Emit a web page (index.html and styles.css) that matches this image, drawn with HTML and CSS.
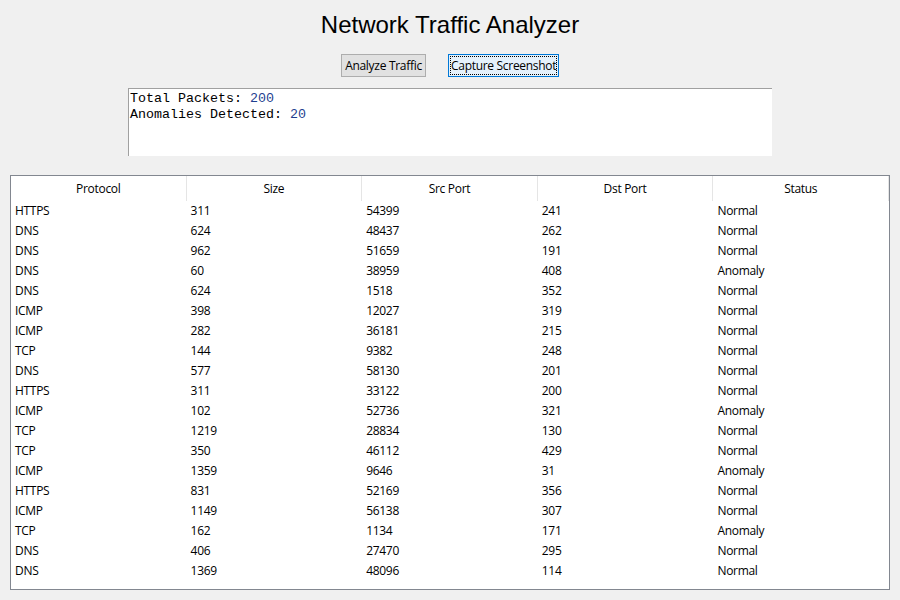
FILE: index.html
```html
<!DOCTYPE html>
<html lang="en">
<head>
<meta charset="utf-8">
<title>Network Traffic Analyzer</title>
<link rel="stylesheet" href="styles.css">
</head>
<body>
<h1 class="title">Network Traffic Analyzer</h1>
<div class="actions">
  <button class="btn">Analyze Traffic</button>
  <button class="btn btn-focus"><span class="focus-ring">Capture Screenshot</span></button>
</div>
<div class="summary">
  <div class="line">Total Packets: <span class="num">200</span></div>
  <div class="line">Anomalies Detected: <span class="num">20</span></div>
</div>
<div class="table">
  <div class="head">
    <div class="hcell">Protocol</div>
    <div class="hcell">Size</div>
    <div class="hcell">Src Port</div>
    <div class="hcell">Dst Port</div>
    <div class="hcell">Status</div>
  </div>
  <div class="body">
    <div class="row"><div class="cell">HTTPS</div><div class="cell">311</div><div class="cell">54399</div><div class="cell">241</div><div class="cell">Normal</div></div>
    <div class="row"><div class="cell">DNS</div><div class="cell">624</div><div class="cell">48437</div><div class="cell">262</div><div class="cell">Normal</div></div>
    <div class="row"><div class="cell">DNS</div><div class="cell">962</div><div class="cell">51659</div><div class="cell">191</div><div class="cell">Normal</div></div>
    <div class="row"><div class="cell">DNS</div><div class="cell">60</div><div class="cell">38959</div><div class="cell">408</div><div class="cell">Anomaly</div></div>
    <div class="row"><div class="cell">DNS</div><div class="cell">624</div><div class="cell">1518</div><div class="cell">352</div><div class="cell">Normal</div></div>
    <div class="row"><div class="cell">ICMP</div><div class="cell">398</div><div class="cell">12027</div><div class="cell">319</div><div class="cell">Normal</div></div>
    <div class="row"><div class="cell">ICMP</div><div class="cell">282</div><div class="cell">36181</div><div class="cell">215</div><div class="cell">Normal</div></div>
    <div class="row"><div class="cell">TCP</div><div class="cell">144</div><div class="cell">9382</div><div class="cell">248</div><div class="cell">Normal</div></div>
    <div class="row"><div class="cell">DNS</div><div class="cell">577</div><div class="cell">58130</div><div class="cell">201</div><div class="cell">Normal</div></div>
    <div class="row"><div class="cell">HTTPS</div><div class="cell">311</div><div class="cell">33122</div><div class="cell">200</div><div class="cell">Normal</div></div>
    <div class="row"><div class="cell">ICMP</div><div class="cell">102</div><div class="cell">52736</div><div class="cell">321</div><div class="cell">Anomaly</div></div>
    <div class="row"><div class="cell">TCP</div><div class="cell">1219</div><div class="cell">28834</div><div class="cell">130</div><div class="cell">Normal</div></div>
    <div class="row"><div class="cell">TCP</div><div class="cell">350</div><div class="cell">46112</div><div class="cell">429</div><div class="cell">Normal</div></div>
    <div class="row"><div class="cell">ICMP</div><div class="cell">1359</div><div class="cell">9646</div><div class="cell">31</div><div class="cell">Anomaly</div></div>
    <div class="row"><div class="cell">HTTPS</div><div class="cell">831</div><div class="cell">52169</div><div class="cell">356</div><div class="cell">Normal</div></div>
    <div class="row"><div class="cell">ICMP</div><div class="cell">1149</div><div class="cell">56138</div><div class="cell">307</div><div class="cell">Normal</div></div>
    <div class="row"><div class="cell">TCP</div><div class="cell">162</div><div class="cell">1134</div><div class="cell">171</div><div class="cell">Anomaly</div></div>
    <div class="row"><div class="cell">DNS</div><div class="cell">406</div><div class="cell">27470</div><div class="cell">295</div><div class="cell">Normal</div></div>
    <div class="row"><div class="cell">DNS</div><div class="cell">1369</div><div class="cell">48096</div><div class="cell">114</div><div class="cell">Normal</div></div>
  </div>
</div>
</body>
</html>
```
FILE: styles.css
```css
* { box-sizing: border-box; }
html, body { margin: 0; padding: 0; }
body {
  width: 900px;
  height: 600px;
  background: #f0f0f0;
  color: #000;
  font-family: "Open Sans", "Noto Sans", sans-serif;
  font-size: 12px;
  letter-spacing: -0.3px;
  overflow: hidden;
}
.title {
  margin: 11px 0 0;
  height: 28px;
  line-height: 28px;
  text-align: center;
  font-family: "Liberation Sans", Arial, sans-serif;
  font-weight: normal;
  font-size: 24px;
  letter-spacing: 0;
}
.actions {
  margin-top: 15px;
  display: flex;
  justify-content: center;
  gap: 22px;
}
.btn {
  height: 23px;
  padding: 0;
  border: 1px solid #adadad;
  background: #e1e1e1;
  font-family: "Open Sans", "Noto Sans", sans-serif;
  font-size: 12px;
  letter-spacing: -0.3px;
  color: #000;
  width: 85px;
  line-height: 21px;
  white-space: nowrap;
}
.btn-focus {
  width: 111px;
  border-color: #0078d7;
  background: #e5f1fb;
  padding: 1px;
}
.focus-ring {
  display: block;
  height: 19px;
  line-height: 18px;
  border: 1px dotted #000;
}
.summary {
  width: 644px;
  height: 68px;
  margin: 11px auto 0;
  background: #fff;
  border-top: 1px solid #a0a0a0;
  border-left: 1px solid #a0a0a0;
  padding: 2px 1px;
  font-family: "Liberation Mono", "Courier New", monospace;
  font-size: 13.33px;
  line-height: 16px;
  letter-spacing: 0;
}
.num { color: #1f3f8f; }
.table {
  margin: 19px 10px 0;
  height: 415px;
  background: #fff;
  border: 1px solid #828790;
}
.head, .row {
  display: grid;
  grid-template-columns: repeat(5, 1fr);
}
.head { height: 24px; }
.hcell {
  text-align: center;
  line-height: 24px;
  padding-top: 1px;
  border-right: 1px solid #e5e5e5;
}
.row { height: 20px; }
.cell {
  padding: 1px 0 0 4px;
  line-height: 20px;
  white-space: nowrap;
}
```
